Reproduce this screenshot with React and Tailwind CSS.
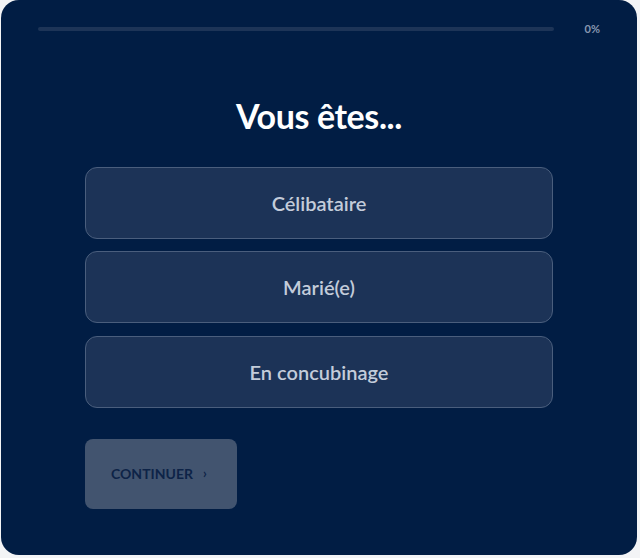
import React from "react";

const options = ["Célibataire", "Marié(e)", "En concubinage"];

export default function App() {
  return (
    <div className="w-[640px] h-[558px] bg-[#f3f4f6] pl-[1px] pr-[3px] pb-[3px] font-['Lato',sans-serif]">
      <div className="h-full bg-[#011d44] rounded-[18px] flex flex-col">
        {/* progress */}
        <div className="flex items-center pt-[21px] pl-[37px] pr-[37px]">
          <div className="flex-1 h-[4px] rounded-full bg-[#1d3457]" />
          <span className="ml-[31px] text-[11px] font-bold text-[#8797b0]">0%</span>
        </div>

        <h1 className="mt-[61px] text-center text-[34px] font-bold text-white leading-none tracking-[-0.4px]">
          Vous êtes...
        </h1>

        <div className="mt-[34px] mx-[84px] flex flex-col gap-[12.5px]">
          {options.map((o) => (
            <button
              key={o}
              className="h-[72px] rounded-[12px] border border-[#4a5e7d] bg-[#1c3357] text-[20px] font-semibold text-[#c3ccda]"
            >
              {o}
            </button>
          ))}
        </div>

        <div className="mt-[31px] mx-[84px]">
          <button className="w-[152px] h-[70px] rounded-[8px] bg-[#42546f] flex items-center pl-[26px] gap-[10px] text-[14px] font-bold text-[#0d2347] uppercase">
            <span>Continuer</span>
            <span className="text-[13px]">›</span>
          </button>
        </div>
      </div>
    </div>
  );
}
